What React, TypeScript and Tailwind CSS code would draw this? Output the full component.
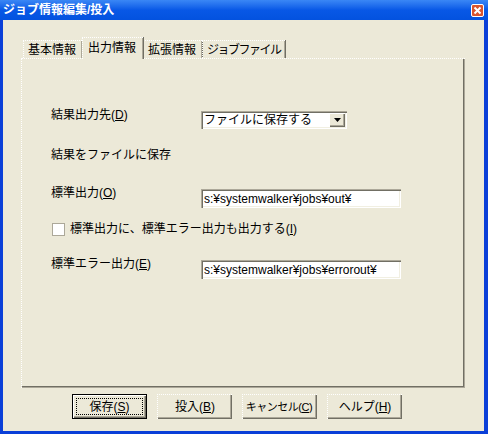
import React from 'react'

const font = "font-['Liberation_Sans','Noto_Sans_CJK_JP',sans-serif]"

function Mn({ label, k }: { label: string; k: string }) {
  return (
    <span className="whitespace-nowrap">
      {label}(<span className="underline">{k}</span>)
    </span>
  )
}

function Tab({ children, active, className }: { children: React.ReactNode; active?: boolean; className?: string }) {
  if (active) {
    return (
      <div className={`relative z-10 -mb-px h-[22px] px-[5px] pt-[2px] bg-[#ECE9D8] border-l border-t border-white border-dotted shadow-[inset_-1px_0_0_#ACA899,1px_0_0_#716F64] leading-[16px] whitespace-nowrap overflow-hidden ${className ?? ''}`}>
        {children}
      </div>
    )
  }
  return (
    <div className={`h-[18px] px-[4px] pt-[1px] border-l border-t border-white border-dotted shadow-[inset_-1px_0_0_#ACA899,1px_0_0_#716F64] leading-[16px] whitespace-nowrap overflow-hidden ${className ?? ''}`}>
      {children}
    </div>
  )
}

function Sunken({ children, className }: { children: React.ReactNode; className?: string }) {
  return (
    <div
      className={`bg-white shadow-[inset_1px_1px_0_#ACA899,inset_2px_2px_0_#716F64,inset_-1px_-1px_0_#FFFFFF,inset_-2px_-2px_0_#F1EFE2] ${className ?? ''}`}
    >
      {children}
    </div>
  )
}

function Btn({ children, def }: { children: React.ReactNode; def?: boolean }) {
  if (def) {
    return (
      <div className="w-[75px] h-[25px] border border-black bg-[#ECE9D8] shadow-[inset_1px_1px_0_#FFFFFF,inset_-1px_-1px_0_#716F64,inset_-2px_-2px_0_#ACA899] flex items-center justify-center p-[3px]">
        <div className="w-full h-full border border-dotted border-black flex items-center justify-center leading-none">
          {children}
        </div>
      </div>
    )
  }
  return (
    <div className="w-[75px] h-[25px] bg-[#ECE9D8] border-l border-t border-r-0 border-b-0 border-white border-dotted shadow-[inset_-1px_-1px_0_#716F64,inset_-2px_-2px_0_#ACA899] flex items-center justify-center leading-none">
      {children}
    </div>
  )
}

export default function App() {
  return (
    <div className={`w-[488px] h-[434px] flex flex-col bg-[#0A3FD8] text-[12px] text-black ${font}`}>
      {/* Title bar */}
      <div className="h-[20px] shrink-0 flex items-center justify-between pl-[3px] pr-[4px] bg-gradient-to-b from-[#3A87F5] via-[#0858E6] to-[#0352DF]">
        <span className="text-white font-bold text-[12px] leading-none">ジョブ情報編集/投入</span>
        <div className="w-[13px] h-[13px] rounded-[2px] border border-white bg-[#D9542E] flex items-center justify-center">
          <svg width="9" height="9" viewBox="0 0 9 9">
            <path d="M1.5 1.5 L7.5 7.5 M7.5 1.5 L1.5 7.5" stroke="white" strokeWidth="2" />
          </svg>
        </div>
      </div>

      {/* Client area */}
      <div className="flex-1 ml-[3px] mr-[4px] mb-[3px] bg-[#ECE9D8] flex flex-col">
        {/* Tabs */}
        <div className="mt-[17px] h-[21px] pl-[20px] flex items-end">
          <Tab className="w-[59px]">基本情報</Tab>
          <Tab active className="w-[61px]">出力情報</Tab>
          <Tab className="w-[59px]">拡張情報</Tab>
          <Tab className="w-[83px] tracking-[-1.5px]">ジョブファイル</Tab>
        </div>

        {/* Panel */}
        <div className="ml-[18px] mr-[19px] h-[330px] border-l border-t border-r-0 border-b-0 border-white border-dotted shadow-[inset_-1px_-1px_0_#ACA899,inset_-2px_-2px_0_#716F64] pl-[29px] flex flex-col">
          <div className="mt-[48px] flex items-start">
            <div className="w-[150px] leading-[16px]"><Mn label="結果出力先" k="D" /></div>
            <Sunken className="mt-[4px] w-[146px] h-[18px] flex items-center">
              <span className="flex-1 pl-[3px] leading-none">ファイルに保存する</span>
              <div className="w-[16px] h-[14px] mr-[2px] bg-[#ECE9D8] shadow-[inset_1px_1px_0_#FFFFFF,inset_-1px_-1px_0_#716F64,inset_-2px_-2px_0_#ACA899] flex items-center justify-center">
                <svg width="7" height="4" viewBox="0 0 7 4">
                  <path d="M0 0 H7 L3.5 4 Z" fill="black" />
                </svg>
              </div>
            </Sunken>
          </div>

          <div className="mt-[18px] leading-[16px]">結果をファイルに保存</div>

          <div className="mt-[22px] flex items-start">
            <div className="w-[150px] leading-[16px]"><Mn label="標準出力" k="O" /></div>
            <Sunken className="mt-[4px] w-[200px] h-[19px] flex items-center pl-[3px]">
              <span className="leading-none">s:¥systemwalker¥jobs¥out¥</span>
            </Sunken>
          </div>

          <div className="mt-[13px] h-[16px] flex items-center">
            <div className="ml-[1px] w-[13px] h-[13px] bg-white shadow-[inset_1px_1px_0_#ACA899,inset_-1px_-1px_0_#ACA899]" />
            <span className="ml-[5px] leading-[16px] whitespace-nowrap">
              標準出力に、標準エラー出力も出力する(<span className="underline">I</span>)
            </span>
          </div>

          <div className="mt-[19px] flex items-start">
            <div className="w-[150px] leading-[16px]"><Mn label="標準エラー出力" k="E" /></div>
            <Sunken className="mt-[4px] w-[200px] h-[19px] flex items-center pl-[3px]">
              <span className="leading-none">s:¥systemwalker¥jobs¥errorout¥</span>
            </Sunken>
          </div>
        </div>

        {/* Buttons */}
        <div className="mt-[6px] pl-[69px] flex gap-[10px]">
          <Btn def><Mn label="保存" k="S" /></Btn>
          <Btn><Mn label="投入" k="B" /></Btn>
          <Btn><span className="text-[11px] tracking-[-0.5px] pr-[2px]"><Mn label="キャンセル" k="C" /></span></Btn>
          <Btn><Mn label="ヘルプ" k="H" /></Btn>
        </div>
      </div>
    </div>
  )
}
